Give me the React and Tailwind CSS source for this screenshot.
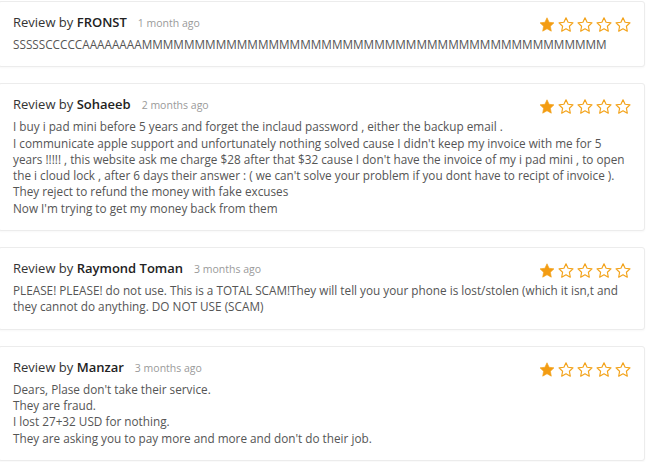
import React from "react";

const Star = ({ filled }) => (
  <svg width="16" height="15" viewBox="0 0 24 23" className="block">
    <path
      d="M12 1.2l3.2 6.9 7.5.9-5.5 5.2 1.4 7.5L12 18l-6.6 3.7 1.4-7.5L1.3 9l7.5-.9z"
      fill={filled ? "#f39c12" : "none"}
      stroke="#f3a31b"
      strokeWidth={filled ? 1 : 1.8}
      strokeLinejoin="round"
    />
  </svg>
);

const Stars = () => (
  <div className="flex gap-[3px]">
    <Star filled />
    <Star />
    <Star />
    <Star />
    <Star />
  </div>
);

const Review = ({ name, time, lines }) => (
  <div className="ml-[-2px] w-[647px] rounded-[3px] border border-[#ececec] bg-white pl-[14px] pr-[13px] pt-[9px] pb-[14px] shadow-[0_1px_2px_rgba(0,0,0,0.03)]">
    <div className="flex items-start justify-between">
      <div className="flex items-baseline">
        <span className="text-[13px] leading-[22px] text-[#333]">
          Review by <span className="font-semibold text-[#222]">{name}</span>
        </span>
        <span className="ml-[11px] text-[10.5px] text-[#9a9a9a]">{time}</span>
      </div>
      <div className="mt-[6px]">
        <Stars />
      </div>
    </div>
    <div className="mt-[3px] text-[11.75px] leading-[16.3px] text-[#555]">
      {lines.map((l, i) => (
        <div key={i} className="whitespace-nowrap">{l}</div>
      ))}
    </div>
  </div>
);

export default function App() {
  return (
    <div
      className="flex h-[462px] w-[650px] flex-col gap-[16px] overflow-hidden bg-white pt-[1px]"
      style={{ fontFamily: '"Open Sans", "Noto Sans", sans-serif' }}
    >
      <Review
        name="FRONST"
        time="1 month ago"
        lines={["SSSSSCCCCCAAAAAAAAMMMMMMMMMMMMMMMMMMMMMMMMMMMMMMMMMMMMMMMMMMMM"]}
      />
      <Review
        name="Sohaeeb"
        time="2 months ago"
        lines={[
          "I buy i pad mini before 5 years and forget the inclaud password , either the backup email .",
          "I communicate apple support and unfortunately nothing solved cause I didn't keep my invoice with me for 5",
          "years !!!!! , this website ask me charge $28 after that $32 cause I don't have the invoice of my i pad mini , to open",
          "the i cloud lock , after 6 days their answer : ( we can't solve your problem if you dont have to recipt of invoice ).",
          "They reject to refund the money with fake excuses",
          "Now I'm trying to get my money back from them",
        ]}
      />
      <Review
        name="Raymond Toman"
        time="3 months ago"
        lines={[
          "PLEASE! PLEASE! do not use. This is a TOTAL SCAM!They will tell you your phone is lost/stolen (which it isn,t and",
          "they cannot do anything. DO NOT USE (SCAM)",
        ]}
      />
      <Review
        name="Manzar"
        time="3 months ago"
        lines={[
          "Dears, Plase don't take their service.",
          "They are fraud.",
          "I lost 27+32 USD for nothing.",
          "They are asking you to pay more and more and don't do their job.",
        ]}
      />
    </div>
  );
}
